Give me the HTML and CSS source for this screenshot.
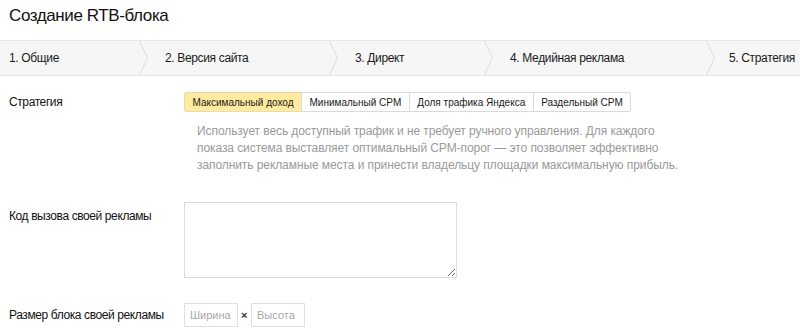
FILE: index.html
```html
<!DOCTYPE html>
<html lang="ru">
<head>
    <meta charset="UTF-8">
    <title>Создание RTB-блока</title>
    <link rel="stylesheet" href="styles.css">
</head>
<body>
    <h1 class="page-title">Создание RTB-блока</h1>

    <div class="steps">
        <div class="step step-1">
            <span class="step-text">1. Общие</span>
            <svg class="chevron" width="9" height="34" viewBox="0 0 9 34"><polyline points="0.5,0 8.5,17 0.5,34" fill="none" stroke="#dcdcdc" stroke-width="1"/></svg>
        </div>
        <div class="step step-2">
            <span class="step-text">2. Версия сайта</span>
            <svg class="chevron" width="9" height="34" viewBox="0 0 9 34"><polyline points="0.5,0 8.5,17 0.5,34" fill="none" stroke="#dcdcdc" stroke-width="1"/></svg>
        </div>
        <div class="step step-3">
            <span class="step-text">3. Директ</span>
            <svg class="chevron" width="9" height="34" viewBox="0 0 9 34"><polyline points="0.5,0 8.5,17 0.5,34" fill="none" stroke="#dcdcdc" stroke-width="1"/></svg>
        </div>
        <div class="step step-4">
            <span class="step-text">4. Медийная реклама</span>
            <svg class="chevron" width="9" height="34" viewBox="0 0 9 34"><polyline points="0.5,0 8.5,17 0.5,34" fill="none" stroke="#dcdcdc" stroke-width="1"/></svg>
        </div>
        <div class="step step-5">
            <span class="step-text">5. Стратегия</span>
        </div>
    </div>

    <form class="form">
        <div class="form-row strategy-row">
            <div class="form-label">Стратегия</div>
            <div class="form-control">
                <div class="radio-group">
                    <button type="button" class="radio-btn checked">Максимальный доход</button>
                    <button type="button" class="radio-btn">Минимальный CPM</button>
                    <button type="button" class="radio-btn">Доля трафика Яндекса</button>
                    <button type="button" class="radio-btn">Раздельный CPM</button>
                </div>
                <p class="hint">Использует весь доступный трафик и не требует ручного управления. Для каждого показа система выставляет оптимальный CPM-порог — это позволяет эффективно заполнить рекламные места и принести владельцу площадки максимальную прибыль.</p>
            </div>
        </div>

        <div class="form-row code-row">
            <label class="form-label" for="adCode">Код вызова своей рекламы</label>
            <div class="form-control">
                <textarea id="adCode" name="adCode"></textarea>
            </div>
        </div>

        <div class="form-row size-row">
            <div class="form-label">Размер блока своей рекламы</div>
            <div class="form-control size-inputs">
                <input type="text" name="width" placeholder="Ширина">
                <span class="times">×</span>
                <input type="text" name="height" placeholder="Высота">
            </div>
        </div>
    </form>
</body>
</html>
```

FILE: styles.css
```css
body {
    margin: 0;
    font-family: 'Liberation Sans', Arial, sans-serif;
    color: #000;
    background: #fff;
}
.page-title {
    margin: 0;
    height: 40px;
    box-sizing: border-box;
    padding: 5px 9px 0;
    font-size: 17px;
    line-height: 22px;
    letter-spacing: -0.4px;
    font-weight: normal;
    color: #111;
}
.steps {
    display: flex;
    height: 34px;
    background-color: #f6f6f6;
    border-top: 1px solid #e6e6e6;
    border-bottom: 1px solid #e6e6e6;
    font-size: 12px;
    letter-spacing: -0.35px;
    color: #1a1a1a;
    white-space: nowrap;
}
.step {
    display: flex;
    align-items: center;
    box-sizing: border-box;
}
.step-1 { width: 148px; padding-left: 9px; }
.step-2 { width: 190px; padding-left: 17px; }
.step-3 { width: 155px; padding-left: 17px; }
.step-4 { width: 222px; padding-left: 17px; }
.step-5 { flex: 1; padding-left: 14px; }
.chevron {
    display: block;
    margin-left: auto;
    flex-shrink: 0;
}
.form {
    padding-top: 16px;
}
.form-row {
    display: flex;
    font-size: 12px;
    letter-spacing: -0.4px;
}
.form-label {
    width: 184px;
    box-sizing: border-box;
    padding-left: 9px;
    color: #111;
}
.strategy-row .form-label {
    line-height: 20px;
}
.radio-group {
    display: flex;
}
.radio-btn {
    height: 20px;
    padding: 0 7.5px;
    margin: 0;
    margin-left: -1px;
    font-family: 'Liberation Sans', Arial, sans-serif;
    font-size: 10px;
    letter-spacing: 0;
    color: #1a1a1a;
    background: #fff;
    border: 1px solid #dadada;
    cursor: pointer;
}
.radio-btn:first-child {
    margin-left: 0;
    border-radius: 2px 0 0 2px;
}
.radio-btn:last-child {
    border-radius: 0 2px 2px 0;
}
.radio-btn.checked {
    background-color: #ffeba0;
    border-color: #e8dcae;
}
.hint {
    width: 490px;
    margin: 11px 0 0;
    padding-left: 13px;
    font-size: 12px;
    line-height: 17px;
    letter-spacing: -0.08px;
    color: #9a9a9a;
}
.code-row {
    margin-top: 28px;
}
.code-row .form-label {
    padding-top: 6px;
    line-height: 16px;
}
textarea {
    display: block;
    width: 273px;
    height: 76px;
    box-sizing: border-box;
    margin: 0;
    border: 1px solid #dcdcdc;
    font-family: 'Liberation Sans', Arial, sans-serif;
    font-size: 13px;
}
.size-row {
    margin-top: 25px;
    align-items: center;
}
.size-inputs {
    display: flex;
    align-items: center;
}
.size-inputs input {
    width: 54px;
    height: 24px;
    box-sizing: border-box;
    margin: 0;
    padding: 0 5px;
    border: 1px solid #e0e0e0;
    font-family: 'Liberation Sans', Arial, sans-serif;
    font-size: 11px;
    letter-spacing: 0;
}
.size-inputs input::placeholder {
    color: #a8a8a8;
}
.times {
    margin: 0 4px 0 3px;
    font-size: 11px;
    font-weight: bold;
    color: #333;
}
```
